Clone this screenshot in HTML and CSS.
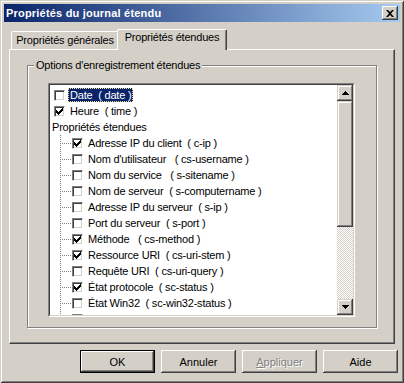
FILE: index.html
```html
<!DOCTYPE html>
<html lang="fr">
  <head>
    <meta charset="UTF-8" />
    <title>Propriétés du journal étendu</title>
    <link rel="stylesheet" href="styles.css">
  </head>
  <body>
    <div class="window">
      <div class="titlebar">
        <span class="title">Propriétés du journal étendu</span>
        <span class="close">
          <svg width="8" height="7" viewBox="0 0 8 7"><path d="M0 0h2l2 2 2-2h2l-3 3.5 3 3.5h-2l-2-2-2 2h-2l3-3.5z" fill="#000"/></svg>
        </span>
      </div>

      <div class="tabs">
        <div class="tab">Propriétés générales</div>
        <div class="tab active">Propriétés étendues</div>
      </div>

      <div class="panel">
        <div class="group">
          <div class="legend">Options d'enregistrement étendues</div>
          <div class="list">
            <div class="list-inner">
              <div class="items">
                <div class="row top selected"><span class="cb"></span><span class="text">Date  ( date )</span></div>
                <div class="row top"><span class="cb"><svg width="7" height="7" viewBox="0 0 7 7"><path d="M0 2v3h1v1h1v1h1v-1h1v-1h1v-1h1v-1h1v-3h-1v1h-1v1h-1v1h-1v1h-1v-1h-1v-1z"/></svg></span><span class="text">Heure  ( time )</span></div>
                <div class="row header"><span class="text">Propriétés étendues</span></div>
                <div class="row child"><span class="branch"></span><span class="cb"><svg width="7" height="7" viewBox="0 0 7 7"><path d="M0 2v3h1v1h1v1h1v-1h1v-1h1v-1h1v-1h1v-3h-1v1h-1v1h-1v1h-1v1h-1v-1h-1v-1z"/></svg></span><span class="text">Adresse IP du client  ( c-ip )</span></div>
                <div class="row child"><span class="branch"></span><span class="cb"></span><span class="text">Nom d'utilisateur   ( cs-username )</span></div>
                <div class="row child"><span class="branch"></span><span class="cb"></span><span class="text">Nom du service   ( s-sitename )</span></div>
                <div class="row child"><span class="branch"></span><span class="cb"></span><span class="text">Nom de serveur  ( s-computername )</span></div>
                <div class="row child"><span class="branch"></span><span class="cb"></span><span class="text">Adresse IP du serveur  ( s-ip )</span></div>
                <div class="row child"><span class="branch"></span><span class="cb"></span><span class="text">Port du serveur  ( s-port )</span></div>
                <div class="row child"><span class="branch"></span><span class="cb"><svg width="7" height="7" viewBox="0 0 7 7"><path d="M0 2v3h1v1h1v1h1v-1h1v-1h1v-1h1v-1h1v-3h-1v1h-1v1h-1v1h-1v1h-1v-1h-1v-1z"/></svg></span><span class="text">Méthode   ( cs-method )</span></div>
                <div class="row child"><span class="branch"></span><span class="cb"><svg width="7" height="7" viewBox="0 0 7 7"><path d="M0 2v3h1v1h1v1h1v-1h1v-1h1v-1h1v-1h1v-3h-1v1h-1v1h-1v1h-1v1h-1v-1h-1v-1z"/></svg></span><span class="text">Ressource URI  ( cs-uri-stem )</span></div>
                <div class="row child"><span class="branch"></span><span class="cb"></span><span class="text">Requête URI  ( cs-uri-query )</span></div>
                <div class="row child"><span class="branch"></span><span class="cb"><svg width="7" height="7" viewBox="0 0 7 7"><path d="M0 2v3h1v1h1v1h1v-1h1v-1h1v-1h1v-1h1v-3h-1v1h-1v1h-1v1h-1v1h-1v-1h-1v-1z"/></svg></span><span class="text">État protocole  ( sc-status )</span></div>
                <div class="row child"><span class="branch"></span><span class="cb"></span><span class="text">État Win32  ( sc-win32-status )</span></div>
                <div class="row child"><span class="branch"></span><span class="cb"></span><span class="text">Octets envoyés  ( sc-bytes )</span></div>
              </div>
              <div class="scrollbar">
                <div class="sb-btn"><svg width="7" height="4" viewBox="0 0 7 4"><path d="M3 0h1v1h1v1h1v1h1v1h-7v-1h1v-1h1v-1h1z"/></svg></div>
                <div class="sb-thumb"></div>
                <div class="sb-track"></div>
                <div class="sb-btn"><svg width="7" height="4" viewBox="0 0 7 4"><path d="M0 0h7v1h-1v1h-1v1h-1v1h-1v-1h-1v-1h-1v-1h-1z"/></svg></div>
              </div>
            </div>
          </div>
        </div>
      </div>

      <div class="buttons">
        <button class="btn default">OK</button>
        <button class="btn">Annuler</button>
        <button class="btn disabled"><u>A</u>ppliquer</button>
        <button class="btn">Aide</button>
      </div>
    </div>
  </body>
</html>
```

FILE: styles.css
```css
* {
  box-sizing: border-box;
}
body {
  margin: 0;
  background: #d4d0c8;
  font-family: "Liberation Sans", Arial, sans-serif;
  font-size: 11px;
  letter-spacing: -0.2px;
  color: #000;
}
.window {
  width: 404px;
  height: 383px;
  padding: 4px;
  background: #d4d0c8;
  box-shadow: inset 1px 1px #d4d0c8, inset -1px -1px #404040,
    inset 2px 2px #fff, inset -2px -2px #808080;
  display: flex;
  flex-direction: column;
}
.titlebar {
  height: 18px;
  display: flex;
  align-items: center;
  justify-content: space-between;
  padding: 0 2px 0 2px;
  background: linear-gradient(to right, #0a246a, #a6caf0);
  color: #fff;
  font-weight: bold;
  letter-spacing: 0.2px;
}
.close {
  width: 16px;
  height: 14px;
  display: flex;
  align-items: center;
  justify-content: center;
  background: #d4d0c8;
  box-shadow: inset -1px -1px #404040, inset 1px 1px #fff,
    inset -2px -2px #808080;
}
.close svg {
  display: block;
}

/* tabs */
.tabs {
  display: flex;
  align-items: flex-end;
  height: 20px;
  margin-top: 7px;
  padding-left: 7px;
}
.tab {
  height: 18px;
  width: 108px;
  padding-top: 2px;
  text-align: center;
  background: #d4d0c8;
  border-top: 1px solid #fff;
  border-left: 1px solid #fff;
  border-right: 1px solid #404040;
  border-radius: 2px 2px 0 0;
  box-shadow: inset -1px 0 #808080;
}
.tab.active {
  position: relative;
  height: 21px;
  width: 110px;
  margin-left: -2px;
  margin-bottom: -1px;
  padding-top: 1px;
}

/* panel */
.panel {
  height: 295px;
  margin: 0 5px;
  padding: 15px 0 0 17px;
  border-top: 1px solid #fff;
  border-left: 1px solid #fff;
  border-right: 1px solid #404040;
  border-bottom: 1px solid #404040;
  box-shadow: inset -1px -1px #808080;
}
.group {
  width: 350px;
  height: 263px;
  border: 1px solid #808080;
  box-shadow: inset 1px 1px #fff, 1px 1px #fff;
}
.legend {
  width: max-content;
  margin: -7px 0 0 6px;
  padding: 0 2px;
  line-height: 13px;
  background: #d4d0c8;
}
.list {
  width: 307px;
  height: 234px;
  margin: 11px 0 0 20px;
  border: 1px solid;
  border-color: #808080 #fff #fff #808080;
}
.list-inner {
  height: 100%;
  display: flex;
  border: 1px solid;
  border-color: #404040 #d4d0c8 #d4d0c8 #404040;
  background: #fff;
  overflow: hidden;
}
.items {
  flex: 1;
  padding-top: 2px;
  overflow: hidden;
}
.row {
  height: 16px;
  display: flex;
  align-items: center;
}
.row.top {
  padding-left: 4px;
}
.row.child {
  padding-left: 10px;
}
.branch {
  width: 12px;
  align-self: stretch;
  background: linear-gradient(#808080 50%, transparent 50%) 0 0 / 1px 2px repeat-y,
    linear-gradient(90deg, #808080 50%, transparent 50%) 2px 8px / 2px 1px repeat-x;
}
.cb {
  width: 11px;
  height: 11px;
  flex: none;
  margin-right: 3px;
  background: #fff;
  border: 1px solid;
  border-color: #808080 #fff #fff #808080;
  box-shadow: inset 1px 1px #404040, inset -1px -1px #d4d0c8;
}
.cb svg {
  display: block;
  margin: 1px;
}
.text {
  white-space: pre;
  line-height: 12px;
  padding: 0 1px;
  border: 1px solid transparent;
}
.selected .text {
  background: #0a246a;
  color: #fff;
  border: 1px dotted #f5db95;
}

/* scrollbar */
.scrollbar {
  width: 16px;
  display: flex;
  flex-direction: column;
}
.sb-btn,
.sb-thumb {
  background: #d4d0c8;
  box-shadow: inset -1px -1px #404040, inset 1px 1px #d4d0c8,
    inset -2px -2px #808080, inset 2px 2px #fff;
}
.sb-btn {
  height: 16px;
  display: flex;
  align-items: center;
  justify-content: center;
}
.sb-btn svg {
  display: block;
}
.sb-thumb {
  height: 126px;
}
.sb-track {
  flex: 1;
  background: repeating-conic-gradient(#fff 0 25%, #d4d0c8 0 50%) 0 0 / 2px 2px;
}

/* buttons */
.buttons {
  display: flex;
  justify-content: flex-end;
  gap: 6px;
  margin: 6px 2px 0 0;
}
.btn {
  width: 75px;
  height: 23px;
  padding: 0;
  border: none;
  background: #d4d0c8;
  font: inherit;
  font-weight: 400;
  color: #000;
  box-shadow: inset -1px -1px #404040, inset 1px 1px #fff,
    inset -2px -2px #808080, inset 2px 2px #d4d0c8;
}
.btn.default {
  box-shadow: inset 0 0 0 1px #000, inset -2px -2px #404040,
    inset 2px 2px #fff, inset -3px -3px #808080;
}
.btn.disabled {
  color: #808080;
  text-shadow: 1px 1px #fff;
}
```
